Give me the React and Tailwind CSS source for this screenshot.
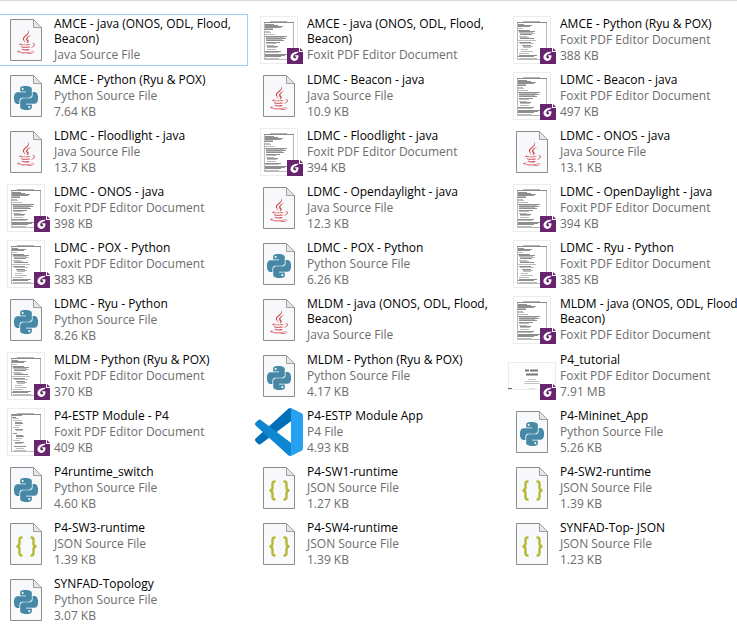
import { useId } from "react";
import { SiPython } from "react-icons/si";
import { FaJava } from "react-icons/fa";

// Text rows of each document preview: [y, x, width, shade]
const PREVIEWS = {
  dense: [[6,2,9,1],[7,2,13,1],[8,2,18,1],[9,2,16,1],[10,2,8,0],[11,2,8,1],[13,2,5,0],[14,2,6,0],[16,2,10,0],[18,2,22,1],[19,3,18,0],[20,3,20,1],[21,3,16,0],[22,3,18,1],[24,3,14,1],[25,3,10,0],[27,3,8,0],[28,4,11,1],[29,4,10,0],[31,4,9,0],[33,2,16,1],[34,2,14,0],[36,2,22,1],[37,2,20,1],[38,2,16,1],[40,2,14,0]],
  indented: [[6,2,6,1],[7,2,14,1],[8,2,12,1],[10,2,5,0],[12,2,12,1],[13,3,16,1],[14,3,14,0],[15,4,15,0],[16,4,12,1],[18,3,8,0],[19,4,9,0],[20,4,14,1],[22,2,18,0],[24,3,12,1],[25,4,14,0],[27,6,9,1],[28,7,10,0],[29,7,8,0],[31,5,7,0],[33,5,12,0],[35,3,10,0],[37,3,18,1],[38,2,16,1],[40,3,18,0]],
  sparse: [[5,2,10,1],[7,2,4,1],[8,3,6,0],[10,3,9,0],[12,5,7,1],[13,5,8,1],[15,5,6,0],[17,3,6,0],[19,5,8,1],[20,6,7,0],[23,3,4,1],[25,6,7,1],[26,6,8,1],[28,6,6,0],[30,3,7,0],[32,5,9,1],[33,5,7,0],[36,4,12,1],[38,6,8,0],[40,4,12,0]],
};

function Page({ children }) {
  const id = useId();
  return (
    <svg viewBox="0 0 48 48" className="size-12" aria-hidden="true">
      <defs>
        <linearGradient id={id} x1="0" y1="0" x2="0" y2="1">
          <stop offset="0" stopColor="#f6f8fb" />
          <stop offset="1" stopColor="#f9fafc" />
        </linearGradient>
      </defs>
      <path d="M8.5 3.5H31.5L39.5 11.5V44.5H8.5Z" fill={`url(#${id})`} stroke="#8c8c8c" />
      <path d="M31.5 3.5V11.5H39.5Z" fill="#e6e6e6" stroke="#a0a0a0" />
      {children}
    </svg>
  );
}

function JavaIcon() {
  return <Page><FaJava x="12" y="14" size="24" color="#d3484c" /></Page>;
}

function PythonIcon() {
  return <Page><SiPython x="12" y="14" size="24" color="#4788a6" /></Page>;
}

function JsonIcon() {
  return (
    <Page>
      <g fill="none" stroke="#b6b935" strokeWidth="2.4">
        <path d="M20.5 17.5H19.5Q17.5 17.5 17.5 20V23.5Q17.5 26.5 14.5 26.5Q17.5 26.5 17.5 29.5V33Q17.5 35.5 19.5 35.5H20.5" />
        <path d="M28.5 17.500H29.500Q31.500 17.500 31.500 20V23.500Q31.500 26.500 34.500 26.500Q31.500 26.500 31.500 29.500V33Q31.500 35.500 29.500 35.500H28.500" />
      </g>
    </Page>
  );
}

function CodeIcon() {
  return (
    <svg viewBox="0 0 100 100" className="size-12" aria-hidden="true">
      <path fill="#0070b8" d="M96.461 10.796 75.857.876C73.472-.273 70.622.212 68.750 2.083L1.299 63.583c-1.815 1.654-1.813 4.511.004 6.162l5.510 5.009c1.485 1.350 3.722 1.450 5.321.237L93.361 13.370C96.086 11.303 100 13.246 100 16.667v-.240c0-2.400-1.375-4.589-3.539-5.631Z" />
      <path fill="#0f86d2" d="M96.461 89.204 75.857 99.125c-2.385 1.148-5.235.663-7.107-1.208L1.299 36.417c-1.815-1.654-1.813-4.511.004-6.162l5.510-5.009c1.485-1.350 3.722-1.450 5.321-.237L93.361 86.630C96.086 88.697 100 86.754 100 83.333v.240c0 2.400-1.375 4.589-3.539 5.631Z" />
      <path fill="#27a1f2" d="M75.858 99.126c-2.386 1.148-5.236.662-7.108-1.210C71.056 100.223 75 98.590 75 95.328V4.672c0-3.262-3.944-4.895-6.250-2.589C70.622.211 73.472-.274 75.858.874l20.601 9.907C98.623 11.822 100 14.011 100 16.413v67.174c0 2.402-1.377 4.592-3.541 5.633Z" />
    </svg>
  );
}

function FoxitBadge() {
  return (
    <svg viewBox="0 0 16 16" className="absolute right-0 bottom-0 size-4" aria-hidden="true">
      <path d="M0 0H12V4H16V16H0Z" fill="#68246d" />
      <path d="M12 0H16V4H12Z" fill="#fff" />
      <path d="M13 0 16 3H13Z" fill="#68246d" />
      <path d="M11.8 3.800Q8 3.600 5.600 5.200Q3.400 6.800 3.400 9Q3.800 12.700 7.400 12.900Q11 12.700 11.500 8.600L11.300 7.300H7.800L8.600 8.800H9.500Q9.300 10.500 7.800 10.500Q6 10.300 6.200 8.300Q6.500 6.200 9 5.700Q10.600 5.300 11.800 3.800Z" fill="#fff" />
    </svg>
  );
}

function PdfIcon({ preview }) {
  return (
    <span className="relative flex size-12 justify-center">
      <svg viewBox="0 0 38 48" className="h-12" aria-hidden="true">
        <rect x="0.5" y="0.5" width="37" height="47" fill="#fff" stroke="#ececec" />
        <path d="M10 5.5H27" stroke="#b5b5b5" />
        <rect x="4.5" y="6.5" width="29" height="37" fill="none" stroke="#b8b8b8" />
        <path d="M4 6.5H34" stroke="#8a8a8a" />
        {PREVIEWS[preview].map(([y, x, w, dark]) => (
          <path key={y} d={`M${x + 3} ${y + 2.5}h${w}`} stroke={dark ? "#8f8f8f" : "#bcbcbc"} />
        ))}
      </svg>
      <FoxitBadge />
    </span>
  );
}

function SlideIcon() {
  return (
    <span className="relative flex size-12">
      <svg viewBox="0 0 48 48" className="size-12" aria-hidden="true">
        <rect x="0.5" y="10.5" width="47" height="27" fill="#fff" stroke="#ececec" />
        <path d="M17 18.500h4m1 0h8M18 22.500h12" stroke="#777" strokeWidth="2" />
        <path d="M20 27.500h8M17 29.500h14M16 31.500h16" stroke="#c4c4c4" />
        <path d="M0 36.500h4" stroke="#666" />
        <path d="M21 36.500h6" stroke="#ddd" />
      </svg>
      <FoxitBadge />
    </span>
  );
}

const KINDS = {
  java: { label: "Java Source File", Icon: JavaIcon },
  py: { label: "Python Source File", Icon: PythonIcon },
  json: { label: "JSON Source File", Icon: JsonIcon },
  p4: { label: "P4 File", Icon: CodeIcon },
  pdf: { label: "Foxit PDF Editor Document", Icon: PdfIcon },
  slides: { label: "Foxit PDF Editor Document", Icon: SlideIcon },
};

const FILES = [
  { name: "AMCE - java (ONOS, ODL, Flood, Beacon)", kind: "java", focused: true },
  { name: "AMCE - java (ONOS, ODL, Flood, Beacon)", kind: "pdf", preview: "dense" },
  { name: "AMCE - Python (Ryu & POX)", kind: "pdf", size: "388 KB", preview: "indented" },
  { name: "AMCE - Python (Ryu & POX)", kind: "py", size: "7.64 KB" },
  { name: "LDMC - Beacon - java", kind: "java", size: "10.9 KB" },
  { name: "LDMC - Beacon - java", kind: "pdf", size: "497 KB", preview: "dense" },
  { name: "LDMC - Floodlight - java", kind: "java", size: "13.7 KB" },
  { name: "LDMC - Floodlight - java", kind: "pdf", size: "394 KB", preview: "dense" },
  { name: "LDMC - ONOS - java", kind: "java", size: "13.1 KB" },
  { name: "LDMC - ONOS - java", kind: "pdf", size: "398 KB", preview: "dense" },
  { name: "LDMC - Opendaylight - java", kind: "java", size: "12.3 KB" },
  { name: "LDMC - OpenDaylight - java", kind: "pdf", size: "394 KB", preview: "dense" },
  { name: "LDMC - POX - Python", kind: "pdf", size: "383 KB", preview: "indented" },
  { name: "LDMC - POX - Python", kind: "py", size: "6.26 KB" },
  { name: "LDMC - Ryu - Python", kind: "pdf", size: "385 KB", preview: "indented" },
  { name: "LDMC - Ryu - Python", kind: "py", size: "8.26 KB" },
  { name: "MLDM - java (ONOS, ODL, Flood, Beacon)", kind: "java" },
  { name: "MLDM - java (ONOS, ODL, Flood, Beacon)", kind: "pdf", preview: "dense" },
  { name: "MLDM - Python (Ryu & POX)", kind: "pdf", size: "370 KB", preview: "indented" },
  { name: "MLDM - Python (Ryu & POX)", kind: "py", size: "4.17 KB" },
  { name: "P4_tutorial", kind: "slides", size: "7.91 MB" },
  { name: "P4-ESTP Module - P4", kind: "pdf", size: "409 KB", preview: "sparse" },
  { name: "P4-ESTP Module App", kind: "p4", size: "4.93 KB" },
  { name: "P4-Mininet_App", kind: "py", size: "5.26 KB" },
  { name: "P4runtime_switch", kind: "py", size: "4.60 KB" },
  { name: "P4-SW1-runtime", kind: "json", size: "1.27 KB" },
  { name: "P4-SW2-runtime", kind: "json", size: "1.39 KB" },
  { name: "P4-SW3-runtime", kind: "json", size: "1.39 KB" },
  { name: "P4-SW4-runtime", kind: "json", size: "1.39 KB" },
  { name: "SYNFAD-Top- JSON", kind: "json", size: "1.23 KB" },
  { name: "SYNFAD-Topology", kind: "py", size: "3.07 KB" },
];

function FileTile({ name, kind, size, preview, focused }) {
  const { label, Icon } = KINDS[kind];
  return (
    <li className={`flex h-[52px] gap-1 border-y border-r py-px pl-[2px] ${focused ? "border-[#99d1ff]" : "border-transparent"}`}>
      <span className="size-12 shrink-0"><Icon preview={preview} /></span>
      <div className="flex w-[184px] flex-col gap-px leading-[15px] text-[#6d6d6d]">
        <h2 className="text-black">{name}</h2>
        <p>{label}</p>
        {size && <p>{size}</p>}
      </div>
    </li>
  );
}

export default function App() {
  return (
    <main className="min-h-screen overflow-hidden border-t border-[#d9d9d9] bg-white pt-[13px] font-['Open_Sans',sans-serif] text-[12px]">
      <ul className="grid grid-cols-[repeat(3,248px)] gap-x-[5px] gap-y-1">
        {FILES.map((file, i) => <FileTile key={i} {...file} />)}
      </ul>
    </main>
  );
}
